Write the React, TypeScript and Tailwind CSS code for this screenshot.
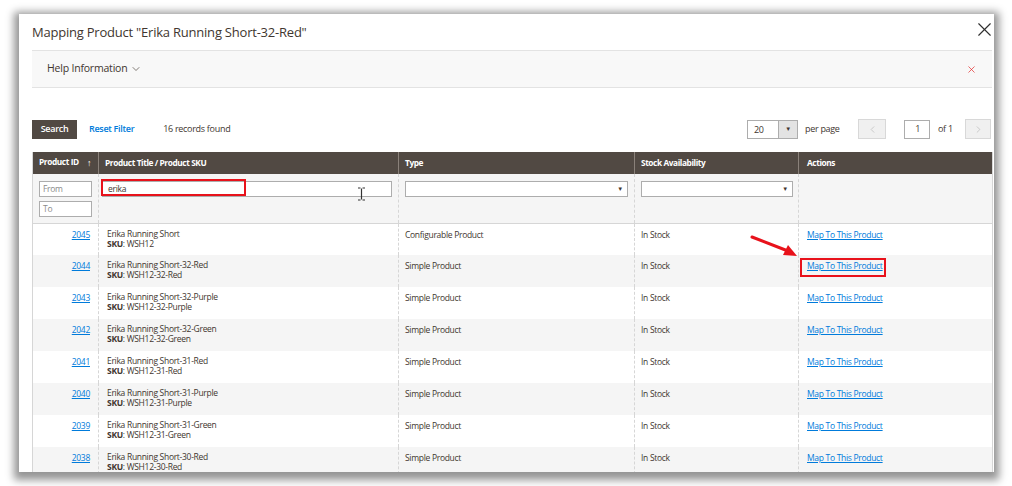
import { ChevronDown, ChevronLeft, ChevronRight, X } from 'lucide-react';

const rows = [
  { id: '2045', title: 'Erika Running Short', sku: 'WSH12', type: 'Configurable Product' },
  { id: '2044', title: 'Erika Running Short-32-Red', sku: 'WSH12-32-Red', type: 'Simple Product' },
  { id: '2043', title: 'Erika Running Short-32-Purple', sku: 'WSH12-32-Purple', type: 'Simple Product' },
  { id: '2042', title: 'Erika Running Short-32-Green', sku: 'WSH12-32-Green', type: 'Simple Product' },
  { id: '2041', title: 'Erika Running Short-31-Red', sku: 'WSH12-31-Red', type: 'Simple Product' },
  { id: '2040', title: 'Erika Running Short-31-Purple', sku: 'WSH12-31-Purple', type: 'Simple Product' },
  { id: '2039', title: 'Erika Running Short-31-Green', sku: 'WSH12-31-Green', type: 'Simple Product' },
  { id: '2038', title: 'Erika Running Short-30-Red', sku: 'WSH12-30-Red', type: 'Simple Product' },
];

function SelectBox({ width }: { width: string }) {
  return (
    <div className={`${width} h-[16px] bg-white border border-[#adadad] flex justify-end items-center`}>
      <span className="text-[6px] text-[#41362f] pr-[4px]">▼</span>
    </div>
  );
}

export default function App() {
  return (
    <div className="w-[1012px] h-[486px] bg-white overflow-hidden relative font-['Open_Sans',sans-serif] text-[#41362f]">
      {/* Modal */}
      <div className="ml-[19px] mt-[14px] w-[975px] h-[458px] bg-white overflow-hidden pl-[13px] pr-[2px] shadow-[0_3px_8px_5px_rgba(0,0,0,0.42)]">
        <header className="h-[36px] flex items-center justify-between">
          <h1 className="text-[13px] text-[#41362f] tracking-[-0.22px] pt-[1px]">Mapping Product "Erika Running Short-32-Red"</h1>
          <X size={23} strokeWidth={1.2} className="text-[#303030] -mr-[4px] -mt-[6px]" />
        </header>

        <div className="h-[38px] bg-[#f8f8f8] border-y border-[#e3e3e3] flex items-center justify-between pl-[15px] pr-[15px]">
          <div className="flex items-center gap-[3px] text-[10.5px] tracking-[-0.2px] text-[#41362f]">
            Help Information
            <ChevronDown size={12} strokeWidth={1.3} />
          </div>
          <X size={11} strokeWidth={1.5} className="text-[#e22626]" />
        </div>

        {/* Toolbar */}
        <div className="mt-[31px] h-[20px] flex items-center text-[9px] tracking-[-0.3px] whitespace-nowrap">
          <button className="h-[19px] w-[45px] bg-[#514943] text-white font-semibold">Search</button>
          <span className="ml-[12px] font-semibold text-[#007bdb]">Reset Filter</span>
          <span className="ml-[29px] text-[#41362f]">16 records found</span>
          <div className="ml-auto flex items-center mr-[1px]">
            <div className="w-[51px] h-[19px] border border-[#adadad] flex">
              <span className="flex-1 pl-[6px] leading-[17px]">20</span>
              <span className="w-[19px] bg-[#e3e3e3] border-l border-[#adadad] flex items-center justify-center text-[6px]">▼</span>
            </div>
            <span className="ml-[7px] w-[36px]">per page</span>
            <div className="ml-[17px] w-[28px] h-[20px] bg-[#f0f0f0] border border-[#d8d8d8] flex items-center justify-center">
              <ChevronLeft size={11} strokeWidth={1.3} className="text-[#b0b0b0]" />
            </div>
            <div className="ml-[18px] w-[26px] h-[19px] bg-white border border-[#adadad] flex items-center justify-end pr-[9px]">1</div>
            <span className="ml-[8px] w-[16px]">of 1</span>
            <div className="ml-[11px] w-[26px] h-[20px] bg-[#f0f0f0] border border-[#d8d8d8] flex items-center justify-center">
              <ChevronRight size={11} strokeWidth={1.3} className="text-[#b0b0b0]" />
            </div>
          </div>
        </div>

        {/* Grid */}
        <table className="mt-[13px] w-[960px] table-fixed border-collapse border-x border-[#d6d6d6] text-[8.5px] tracking-[-0.3px]">
          <colgroup>
            <col className="w-[66px]" />
            <col className="w-[300px]" />
            <col className="w-[236px]" />
            <col className="w-[164px]" />
            <col className="w-[194px]" />
          </colgroup>
          <thead>
            <tr className="h-[22px] bg-[#514943] text-white text-left text-[8.3px] tracking-[-0.4px]">
              <th className="pl-[6px] border-r border-[#8a817a] font-bold">
                <div className="flex justify-between pr-[7px]">
                  <span>Product ID</span>
                  <span className="font-normal text-[9px]">↑</span>
                </div>
              </th>
              <th className="pl-[6px] border-r border-[#8a817a] font-bold">Product Title / Product SKU</th>
              <th className="pl-[6px] border-r border-[#8a817a] font-bold">Type</th>
              <th className="pl-[6px] border-r border-[#8a817a] font-bold">Stock Availability</th>
              <th className="pl-[8px] font-bold">Actions</th>
            </tr>
          </thead>
          <tbody>
            <tr className="h-[49px] bg-[#f5f5f5] border-b border-[#d6d6d6] align-top">
              <td className="pl-[6px] pt-[7px] border-r border-dashed border-[#d6d6d6]">
                <div className="w-[53px] h-[16px] bg-white border border-[#adadad] text-[#8a8a8a] pl-[3px] leading-[14px]">From</div>
                <div className="mt-[4px] w-[53px] h-[16px] bg-white border border-[#adadad] text-[#8a8a8a] pl-[3px] leading-[14px]">To</div>
              </td>
              <td className="pl-[3px] pt-[7px] border-r border-dashed border-[#d6d6d6]">
                <div className="w-[290px] h-[16px] bg-white border border-[#adadad] pl-[5px] leading-[14px]">erika</div>
              </td>
              <td className="pl-[6px] pt-[7px] border-r border-dashed border-[#d6d6d6]">
                <SelectBox width="w-[223px]" />
              </td>
              <td className="pl-[6px] pt-[7px] border-r border-dashed border-[#d6d6d6]">
                <SelectBox width="w-[152px]" />
              </td>
              <td />
            </tr>
            {rows.map((r, i) => (
              <tr key={r.id} className={`h-[32px] align-top ${i % 2 === 1 ? 'bg-[#f5f5f5]' : 'bg-white'}`}>
                <td className="pr-[8px] pt-[5px] text-right border-r border-dashed border-[#d6d6d6]">
                  <span className="text-[#007bdb] underline">{r.id}</span>
                </td>
                <td className="pl-[8px] pt-[5px] leading-[10px] border-r border-dashed border-[#d6d6d6]">
                  <div>{r.title}</div>
                  <div><span className="font-bold">SKU</span>: {r.sku}</div>
                </td>
                <td className="pl-[6px] pt-[5px] border-r border-dashed border-[#d6d6d6]">{r.type}</td>
                <td className="pl-[6px] pt-[5px] border-r border-dashed border-[#d6d6d6]">In Stock</td>
                <td className="pl-[8px] pt-[5px]">
                  <span className="text-[#007bdb] underline">Map To This Product</span>
                </td>
              </tr>
            ))}
          </tbody>
        </table>
      </div>

      {/* Annotations */}
      <div className="absolute left-[101px] top-[179px] w-[145px] h-[17px] border-2 border-[#e8121b]" />
      <div className="absolute left-[800px] top-[258px] w-[86px] h-[19px] border-2 border-[#e8121b]" />
      <svg className="absolute left-[748px] top-[233px]" width="52" height="28" viewBox="0 0 52 28">
        <line x1="4" y1="4" x2="40" y2="18" stroke="#e8121b" strokeWidth="3" strokeLinecap="round" />
        <polygon points="49,23 35,22 40,12" fill="#e8121b" />
      </svg>
      <svg className="absolute left-[357px] top-[187px]" width="9" height="14" viewBox="0 0 9 14">
        <path d="M1 1h2.5M5.5 1H8M4.5 1.5v11M1 13h2.5M5.5 13H8" stroke="#333" strokeWidth="1.2" fill="none" />
      </svg>
    </div>
  );
}
